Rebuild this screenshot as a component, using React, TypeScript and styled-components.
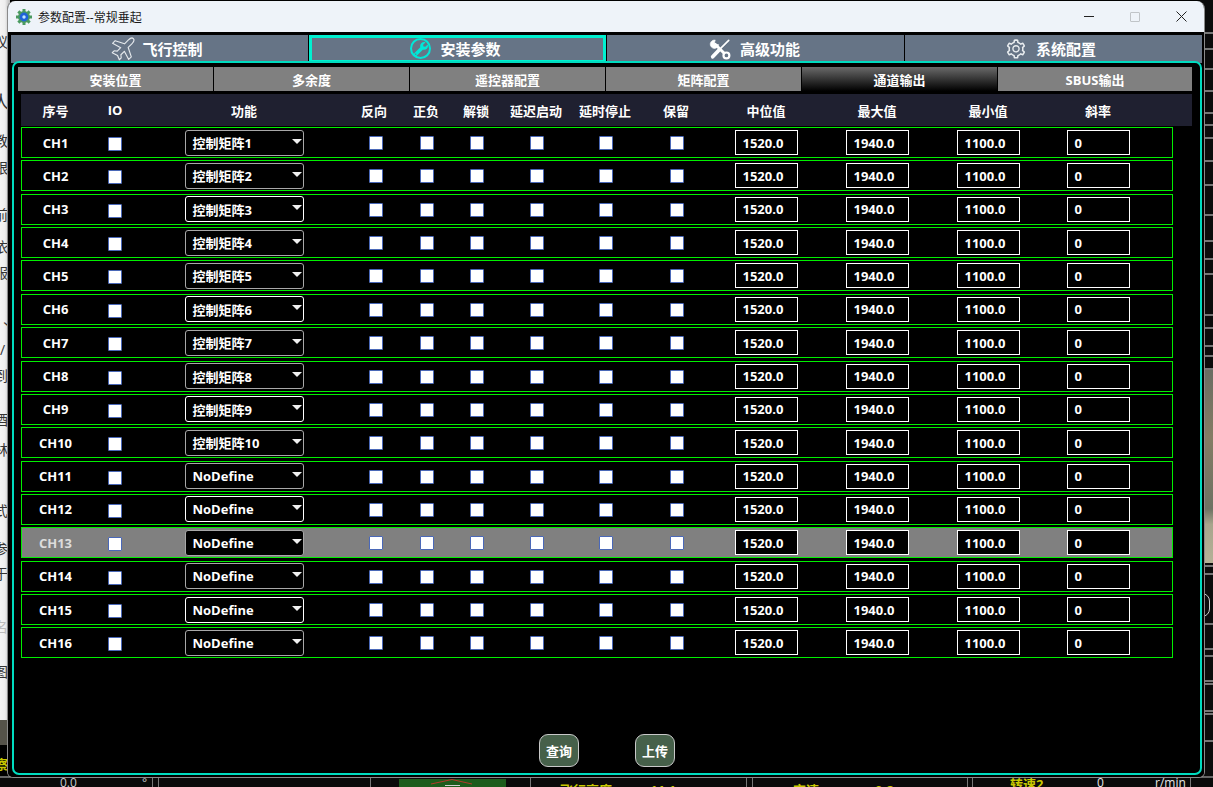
import React from "react"
import styled, { createGlobalStyle } from "styled-components"
import { FaWrench } from "react-icons/fa"
import { AiOutlineSetting } from "react-icons/ai"

const FONT = `"Open Sans", "Noto Sans CJK SC", sans-serif`

const GlobalStyle = createGlobalStyle`
  html, body {
    margin: 0;
    padding: 0;
    background: #000;
    overflow: hidden;
  }
  * {
    box-sizing: border-box;
  }
`

const COLUMNS = "67px 52px 206px 54px 50px 50px 70px 68px 74px 106px 116px 106px 114px"

const mainTabs = [
  { label: "飞行控制", shift: 5, icon: <PlaneIcon /> },
  { label: "安装参数", shift: 4, icon: <WrenchBadge /> },
  { label: "高级功能", shift: 2, icon: <ToolsIcon /> },
  { label: "系统配置", shift: 6, icon: <AiOutlineSetting size={22} color="#e8ecef" /> },
]
const subTabs = ["安装位置", "多余度", "遥控器配置", "矩阵配置", "通道输出", "SBUS输出"]
const headers = ["序号", "IO", "功能", "反向", "正负", "解锁", "延迟启动", "延时停止", "保留", "中位值", "最大值", "最小值", "斜率"]

const channels = Array.from({ length: 16 }, (_, i) => ({
  name: `CH${i + 1}`,
  func: i < 10 ? `控制矩阵${i + 1}` : "NoDefine",
}))

const leftGlyphs = [
  { top: 34, ch: "议" }, { top: 94, ch: "人", big: true }, { top: 133, ch: "教" }, { top: 160, ch: "跟" },
  { top: 207, ch: "前" }, { top: 239, ch: "依" }, { top: 265, ch: "服" }, { top: 318, ch: "丶", near: true },
  { top: 342, ch: "/", near: true }, { top: 368, ch: "到" }, { top: 412, ch: "酒" }, { top: 442, ch: "林" },
  { top: 503, ch: "式" }, { top: 541, ch: "参" }, { top: 566, ch: "于" }, { top: 619, ch: "名", faint: true },
  { top: 664, ch: "图" },
]

const rightLines = [32, 48, 68, 90, 112, 124, 137, 160, 184, 214, 240, 258, 273, 314, 327, 345, 355, 368, 565, 573, 623, 648, 655, 680, 683, 710, 713, 740]

function PlaneIcon() {
  return (
    <PlaneSvg width="25" height="25" viewBox="0 0 24 24" fill="none" stroke="#e4e8ec" strokeWidth="1.1" strokeLinejoin="round">
      <path d="M21.5 2.5C22.5 3.5 22 5.5 20 7.5L16.5 11L19.5 20L17 22.5L12.8 14.7L9.5 18L9.8 21L8 22.8L6.3 18.7L1.2 16L3 14.2L6 14.5L9.3 11.2L1.5 7L4 4.5L13 7.5L16.5 4C18.5 2 20.5 1.5 21.5 2.5Z" />
    </PlaneSvg>
  )
}

function ToolsIcon() {
  return (
    <svg width="22" height="22" viewBox="0 0 24 24" fill="none" stroke="#fff" strokeLinecap="round">
      <path d="M7 7L18.5 18.5" strokeWidth="3.2" />
      <path d="M6.5 2.2A4.6 4.6 0 1 0 10.5 7.2L7.4 7.2L6.2 5.6Z" fill="#fff" strokeWidth="0.6" />
      <circle cx="19" cy="19" r="3.2" fill="#667486" strokeWidth="2.4" />
      <path d="M21.5 2.5L13 11" strokeWidth="1.8" />
      <path d="M11 13L4 20.5" strokeWidth="4" />
    </svg>
  )
}

function WrenchBadge() {
  return (
    <BadgeRing>
      <FaWrench size={14} color="#00e8d8" />
    </BadgeRing>
  )
}

function AppIcon() {
  return (
    <svg width="16" height="16" viewBox="0 0 16 16">
      <g fill="#4a9a60">
        {[0, 45, 90, 135].map((a) => (
          <rect key={a} x="6.5" y="0" width="3" height="16" transform={`rotate(${a} 8 8)`} />
        ))}
      </g>
      <circle cx="8" cy="8" r="6" fill="#4a9a60" />
      <circle cx="8" cy="8" r="4.4" fill="#1f62d8" />
      <circle cx="8" cy="8" r="1.7" fill="#bfe4ff" />
    </svg>
  )
}

export default function App() {
  return (
    <Desktop>
      <GlobalStyle />

      <LeftDoc>
        {leftGlyphs.map((g) => (
          <DocGlyph key={g.top} $top={g.top} $big={g.big} $faint={g.faint} $near={g.near}>
            {g.ch}
          </DocGlyph>
        ))}
        <DocPhoto />
        <YellowGlyph $top={756}>察</YellowGlyph>
        <YellowGlyph $top={776}>即</YellowGlyph>
      </LeftDoc>

      <RightStrip>
        {rightLines.map((y) => (
          <StripLine key={y} $top={y} />
        ))}
        <StripPhoto />
        <StripArc />
      </RightStrip>

      <BottomStrip>
        <BottomValue $left={60} $color="#c8ccd0" $up>0.0</BottomValue>
        <BottomValue $left={142} $color="#c8ccd0" $up>°</BottomValue>
        <BottomSep $left={152} />
        <BottomSep $left={158} />
        <BottomSep $left={370} />
        <GreenBox>
          <RedChevron viewBox="0 0 107 6">
            <polyline points="32,5 53,0.5 73,5" fill="none" stroke="#b53a2a" strokeWidth="1" />
          </RedChevron>
          <HorizonDash />
        </GreenBox>
        <BottomSep $left={530} />
        <BottomLabel $left={560}>飞行高度</BottomLabel>
        <BottomLabel $left={650}>11.1</BottomLabel>
        <BottomSep $left={746} />
        <BottomSep $left={752} />
        <BottomLabel $left={793}>空速</BottomLabel>
        <BottomLabel $left={875}>0.2</BottomLabel>
        <BottomSep $left={967} />
        <BottomSep $left={972} />
        <BottomLabel $left={1010} $up>转速2</BottomLabel>
        <BottomValue $left={1097} $color="#e8e8e8" $up>0</BottomValue>
        <BottomValue $left={1155} $color="#e8e8e8" $up>r/min</BottomValue>
        <BottomSep $left={1190} />
      </BottomStrip>

      <Window>
        <TitleBar>
          <AppIcon />
          <Title>参数配置--常规垂起</Title>
          <Controls>
            <ControlBtn>
              <MinGlyph />
            </ControlBtn>
            <ControlBtn>
              <MaxGlyph />
            </ControlBtn>
            <ControlBtn>
              <svg width="11" height="11" viewBox="0 0 11 11">
                <path d="M0.5 0.5 L10.5 10.5 M10.5 0.5 L0.5 10.5" stroke="#222" strokeWidth="1" />
              </svg>
            </ControlBtn>
          </Controls>
        </TitleBar>

        <Body>
          <MainTabs>
            {mainTabs.map((t, i) => (
              <MainTab key={t.label} $active={i === 1} $shift={t.shift}>
                {t.icon}
                <span>{t.label}</span>
              </MainTab>
            ))}
          </MainTabs>

          <Panel>
            <SubTabs>
              {subTabs.map((t, i) => (
                <SubTab key={t} $active={i === 4}>
                  {t}
                </SubTab>
              ))}
            </SubTabs>

            <HeaderRow>
              {headers.map((h) => (
                <HeaderCell key={h}>{h}</HeaderCell>
              ))}
            </HeaderRow>

            <Rows>
              {channels.map((c, i) => (
                <Row key={c.name} $selected={i === 12}>
                  <ChannelName $selected={i === 12}>{c.name}</ChannelName>
                  <Cell>
                    <CheckBox $low />
                  </Cell>
                  <Cell>
                    <Select $bright={i % 3 === 2}>
                      <span>{c.func}</span>
                      <Caret />
                    </Select>
                  </Cell>
                  {[0, 1, 2, 3, 4, 5].map((k) => (
                    <Cell key={k}>
                      <CheckBox $nudge={k === 0 ? 4 : 2} />
                    </Cell>
                  ))}
                  <Cell>
                    <NumberBox>1520.0</NumberBox>
                  </Cell>
                  <Cell>
                    <NumberBox>1940.0</NumberBox>
                  </Cell>
                  <Cell>
                    <NumberBox>1100.0</NumberBox>
                  </Cell>
                  <Cell>
                    <NumberBox>0</NumberBox>
                  </Cell>
                </Row>
              ))}
            </Rows>

            <Actions>
              <ActionButton>查询</ActionButton>
              <ActionButton>上传</ActionButton>
            </Actions>
          </Panel>
        </Body>
      </Window>
    </Desktop>
  )
}

const Desktop = styled.div`
  position: relative;
  width: 1213px;
  height: 787px;
  overflow: hidden;
  background: #000;
  font-family: ${FONT};
`

const LeftDoc = styled.div`
  position: absolute;
  left: 0;
  top: 0;
  width: 10px;
  height: 787px;
  background: linear-gradient(90deg, #f4f4f4 0%, #eeeeee 50%, #b8b8b8 100%);
`

const DocGlyph = styled.span<{ $top: number; $big?: boolean; $faint?: boolean; $near?: boolean }>`
  position: absolute;
  left: ${(p) => (p.$near ? 0 : p.$big ? -8 : -6)}px;
  top: ${(p) => p.$top}px;
  font-size: ${(p) => (p.$big ? 18 : 14)}px;
  line-height: 16px;
  color: ${(p) => (p.$faint ? "#bbb" : "#333")};
`

const DocPhoto = styled.div`
  position: absolute;
  left: 0;
  top: 720px;
  bottom: 0;
  width: 10px;
  background: linear-gradient(180deg, #55534a 0, #55534a 25px, #000 25px);
`

const YellowGlyph = styled.span<{ $top: number }>`
  position: absolute;
  left: -5px;
  top: ${(p) => p.$top}px;
  font-size: 13px;
  line-height: 16px;
  font-weight: 700;
  color: #c8c800;
`

const RightStrip = styled.div`
  position: absolute;
  left: 1200px;
  top: 0;
  width: 13px;
  height: 787px;
  background: #0c0c0c;
`

const StripLine = styled.div<{ $top: number }>`
  position: absolute;
  left: 0;
  right: 0;
  top: ${(p) => p.$top}px;
  height: 2px;
  background: #777;
`

const StripPhoto = styled.div`
  position: absolute;
  left: 0;
  right: 0;
  top: 370px;
  height: 193px;
  background: linear-gradient(180deg, #6a6d62 0%, #847c64 35%, #6d7263 72%, #a8a58c 80%, #b5b197 100%);
`

const StripArc = styled.div`
  position: absolute;
  right: 3px;
  top: 593px;
  width: 14px;
  height: 24px;
  border: 1px solid #ccc;
  border-radius: 0 8px 8px 0;
`

const BottomStrip = styled.div`
  position: absolute;
  left: 0;
  top: 776px;
  width: 1213px;
  height: 11px;
  background: #0a0a0a;
  border-top: 2px solid #666;
  overflow: hidden;
`

const BottomLabel = styled.span<{ $left: number; $up?: boolean }>`
  position: absolute;
  left: ${(p) => p.$left}px;
  top: ${(p) => (p.$up ? -2 : 4)}px;
  font-size: 13px;
  line-height: 16px;
  font-weight: 700;
  color: #c8c800;
  white-space: nowrap;
`

const BottomValue = styled.span<{ $left: number; $color: string; $up?: boolean }>`
  position: absolute;
  left: ${(p) => p.$left}px;
  top: ${(p) => (p.$up ? -3 : 0)}px;
  font-size: 12px;
  line-height: 16px;
  color: ${(p) => p.$color};
  white-space: nowrap;
`

const BottomSep = styled.div<{ $left: number }>`
  position: absolute;
  left: ${(p) => p.$left}px;
  top: 0;
  bottom: 0;
  width: 1px;
  background: #777;
`

const GreenBox = styled.div`
  position: absolute;
  left: 399px;
  top: 1px;
  bottom: 0;
  width: 107px;
  background: #1c5c1c;
`

const RedChevron = styled.svg`
  display: block;
  width: 107px;
  height: 6px;
`

const HorizonDash = styled.div`
  width: 15px;
  height: 1px;
  margin-left: 46px;
  background: #d0d0d0;
`

const Window = styled.div`
  position: absolute;
  left: 7px;
  top: 1px;
  width: 1198px;
  height: 777px;
  display: flex;
  flex-direction: column;
  border-radius: 8px 8px 6px 6px;
  overflow: hidden;
  background: #000;
  border: 1px solid #8a8a8a;
  border-top: none;
`

const TitleBar = styled.div`
  flex: none;
  height: 31px;
  padding-left: 8px;
  display: flex;
  align-items: center;
  background: #eef3f9;
`

const Title = styled.div`
  margin-left: 6px;
  font-size: 12px;
  color: #1a1a1a;
`

const Controls = styled.div`
  margin-left: auto;
  display: flex;
  height: 100%;
`

const ControlBtn = styled.div`
  width: 46px;
  display: flex;
  align-items: center;
  justify-content: center;
`

const MinGlyph = styled.div`
  width: 10px;
  height: 1px;
  background: #222;
`

const MaxGlyph = styled.div`
  width: 10px;
  height: 10px;
  border: 1px solid #c0c4c8;
  border-radius: 1px;
`

const Body = styled.div`
  flex: 1;
  min-height: 0;
  padding: 3px 2px 2px 3px;
  display: flex;
  flex-direction: column;
  background: #000;
`

const MainTabs = styled.div`
  flex: none;
  height: 26px;
  display: grid;
  grid-template-columns: repeat(4, 1fr);
  column-gap: 1px;
`

const MainTab = styled.div<{ $active?: boolean; $shift: number }>`
  display: flex;
  align-items: center;
  justify-content: center;
  gap: 9px;
  padding-right: ${(p) => p.$shift}px;
  padding-bottom: 1px;
  background: #667486;
  color: #fff;
  font-size: 15px;
  font-weight: 700;
  border: ${(p) => (p.$active ? "3px solid #00f0d0" : "none")};
`

const PlaneSvg = styled.svg`
  margin-right: -3px;
`

const BadgeRing = styled.div`
  width: 21px;
  height: 21px;
  display: flex;
  align-items: center;
  justify-content: center;
  border: 2px solid #00e8d8;
  border-radius: 50%;
`

const Panel = styled.div`
  flex: 1;
  min-height: 0;
  margin-left: 1px;
  padding: 4px 8px 0 4px;
  display: flex;
  flex-direction: column;
  border: 2px solid #00dcc0;
  border-radius: 7px;
  background: #000;
`

const SubTabs = styled.div`
  flex: none;
  height: 24px;
  display: grid;
  grid-template-columns: repeat(5, 195px) 1fr;
  column-gap: 1px;
`

const SubTab = styled.div<{ $active?: boolean }>`
  display: flex;
  align-items: center;
  justify-content: center;
  font-size: 13px;
  font-weight: 700;
  color: #fff;
  background: ${(p) => (p.$active ? "linear-gradient(180deg, #6a6a6a 0%, #000 100%)" : "#808080")};
`

const HeaderRow = styled.div`
  flex: none;
  height: 32px;
  margin: 3px 0 0 3px;
  padding-left: 1px;
  display: grid;
  grid-template-columns: ${COLUMNS};
  align-items: center;
  background: #1f2030;
`

const HeaderCell = styled.div`
  text-align: center;
  font-size: 13px;
  font-weight: 700;
  color: #fff;
`

const Rows = styled.div`
  flex: none;
  width: 1152px;
  margin: 1px 0 0 3px;
  display: flex;
  flex-direction: column;
  gap: 2.37px;
`

const Row = styled.div<{ $selected?: boolean }>`
  height: 31px;
  display: grid;
  grid-template-columns: ${COLUMNS};
  align-items: center;
  border: 1px solid #00f000;
  background: ${(p) => (p.$selected ? "#808080" : "#000")};
`

const Cell = styled.div`
  display: flex;
  align-items: center;
  justify-content: center;
`

const ChannelName = styled.div<{ $selected?: boolean }>`
  text-align: center;
  font-size: 13px;
  font-weight: 700;
  color: ${(p) => (p.$selected ? "#dcdcdc" : "#fff")};
`

const CheckBox = styled.div<{ $low?: boolean; $nudge?: number }>`
  width: 14px;
  height: 14px;
  margin-top: ${(p) => (p.$low ? 3 : 1)}px;
  margin-left: ${(p) => p.$nudge ?? 0}px;
  background: #fff;
  border: 1px solid #4a68b8;
  border-radius: 1px;
`

const Select = styled.div<{ $bright?: boolean }>`
  position: relative;
  width: 119px;
  height: 26px;
  padding: 0 7px;
  display: flex;
  align-items: center;
  font-size: 13px;
  font-weight: 700;
  color: #fff;
  background: #000;
  border: 1px solid ${(p) => (p.$bright ? "#fff" : "#a8a8a8")};
  border-radius: 3px;
`

const Caret = styled.div`
  position: absolute;
  right: 1px;
  top: 8px;
  width: 0;
  height: 0;
  border-left: 5px solid transparent;
  border-right: 5px solid transparent;
  border-top: 5px solid #f0f0f0;
`

const NumberBox = styled.div`
  width: 63px;
  height: 25px;
  padding-left: 7px;
  display: flex;
  align-items: center;
  font-size: 13px;
  font-weight: 700;
  color: #fff;
  background: #000;
  border: 1px solid #fff;
`

const Actions = styled.div`
  margin-top: auto;
  margin-bottom: 6px;
  padding-left: 521px;
  display: flex;
  gap: 56px;
`

const ActionButton = styled.div`
  width: 40px;
  height: 33px;
  display: flex;
  align-items: center;
  justify-content: center;
  font-size: 13px;
  font-weight: 700;
  color: #fff;
  background: #46604a;
  border: 1px solid #c8c8c8;
  border-radius: 9px;
`
